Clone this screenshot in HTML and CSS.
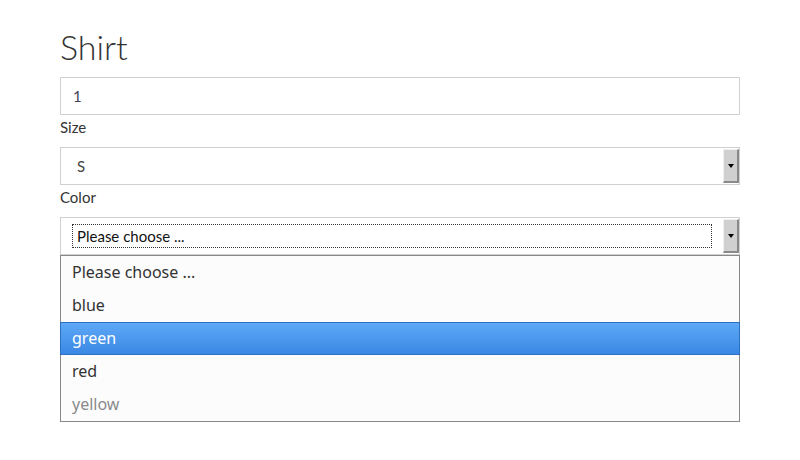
FILE: index.html
```html
<!DOCTYPE html>
<html>
<head>
<meta charset="utf-8">
<link rel="stylesheet" href="styles.css">
</head>
<body>
<div class="form">
  <h1 class="title">Shirt</h1>
  <div class="field input"><span class="value num">1</span></div>
  <label class="label">Size</label>
  <div class="field select">
    <span class="value sel">S</span>
    <span class="arrow"><span class="tri"></span></span>
  </div>
  <label class="label">Color</label>
  <div class="combo">
    <div class="field select">
      <span class="focus"><span class="value dark">Please choose ...</span></span>
      <span class="arrow"><span class="tri"></span></span>
    </div>
    <ul class="list">
      <li class="opt">Please choose ...</li>
      <li class="opt">blue</li>
      <li class="opt active">green</li>
      <li class="opt">red</li>
      <li class="opt disabled">yellow</li>
    </ul>
  </div>
</div>
</body>
</html>
```
FILE: styles.css
```css
html, body { margin: 0; padding: 0; background: #fff; }
body { font-family: Lato, "Open Sans", sans-serif; color: #333; }
.form { width: 680px; padding: 26px 0 0 60px; display: flex; flex-direction: column; }
.title { margin: 0 0 10px 0; font-weight: 300; font-size: 34px; line-height: 41px; color: #333; }
.field { box-sizing: border-box; height: 38px; border: 1px solid #cfcfd4; display: flex; align-items: center; position: relative; background: #fff; }
.value { font-size: 15px; }
.num { padding-left: 12px; color: #445; }
.sel { padding-left: 16px; color: #444; }
.label { font-size: 15px; line-height: 20px; margin: 2px 0 10px 0; color: #333; }
.select { padding-right: 16px; }
.arrow { position: absolute; right: 0; top: 1px; bottom: 1px; width: 16px; box-sizing: border-box; background: #d0d0d0; border-left: 1px solid #f0f0f0; border-top: 1px solid #f0f0f0; border-right: 2px solid #8a8a8a; border-bottom: 2px solid #8a8a8a; display: flex; align-items: center; justify-content: center; }
.tri { width: 0; height: 0; border-left: 3px solid transparent; border-right: 3px solid transparent; border-top: 4px solid #000; }
.focus { margin-left: 11px; width: 640px; height: 24px; box-sizing: border-box; border: 1px dotted #333; display: flex; align-items: center; padding-left: 4px; }
.dark { color: #111; }
.combo { display: flex; flex-direction: column; }
.list { list-style: none; margin: 0; padding: 0; border: 1px solid #888; background: #fcfcfc; font-family: "Noto Sans", "Open Sans", sans-serif; font-size: 16px; }
.opt { box-sizing: border-box; height: 33px; line-height: 31px; padding: 1px 0 0 11px; color: #333; border: 1px solid transparent; border-top-width: 0; margin: 0 -1px; }
.opt.active { background: linear-gradient(#5ea8f7, #3a88e4); border-color: #2f6fbf; border-top-width: 1px; padding-top: 0; color: #fff; }
.opt.disabled { color: #8a8a8a; }
```
